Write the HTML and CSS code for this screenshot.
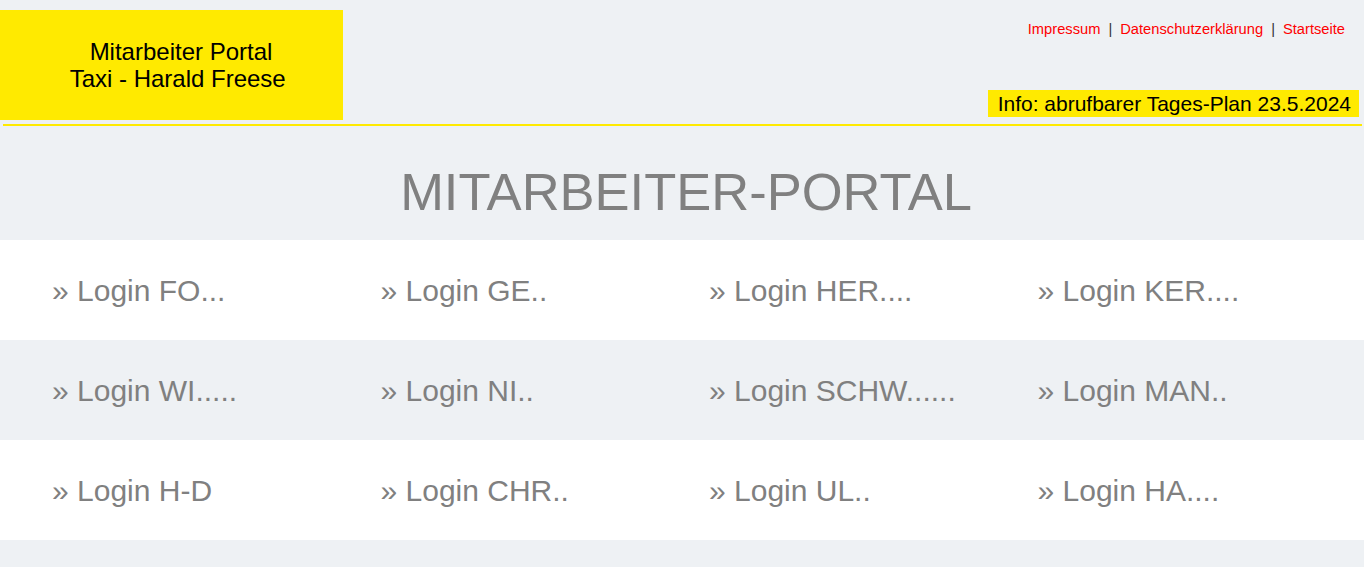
FILE: index.html
```html
<!DOCTYPE html>
<html lang="de">
<head>
<meta charset="UTF-8">
<meta name="viewport" content="width=device-width, initial-scale=1.0">
<title>Mitarbeiter-Portal</title>
<link rel="stylesheet" href="styles.css">
</head>
<body>
<div id="header">
    <div class="brand">
        Mitarbeiter Portal<br>
        Taxi - Harald Freese&nbsp;
    </div>
    <div class="header-right">
        <div class="top-links">
            <a href="#">Impressum</a><span class="sep">|</span><a href="#">Datenschutzerklärung</a><span class="sep">|</span><a href="#">Startseite</a>
        </div>
        <div class="info">Info: abrufbarer Tages-Plan 23.5.2024</div>
    </div>
</div>
<div class="header-line"></div>

<div class="title">
    <h1>MITARBEITER-PORTAL</h1>
</div>

<div class="login-row white">
    <a href="#">» Login FO...</a>
    <a href="#">» Login GE..</a>
    <a href="#">» Login HER....</a>
    <a href="#">» Login KER....</a>
</div>
<div class="login-row">
    <a href="#">» Login WI.....</a>
    <a href="#">» Login NI..</a>
    <a href="#">» Login SCHW......</a>
    <a href="#">» Login MAN..</a>
</div>
<div class="login-row white">
    <a href="#">» Login H-D</a>
    <a href="#">» Login CHR..</a>
    <a href="#">» Login UL..</a>
    <a href="#">» Login HA....</a>
</div>
</body>
</html>
```

FILE: styles.css
```css
body {
    font-family: "Liberation Sans", Arial, sans-serif;
    margin: 0;
    padding: 0;
    background-color: #eef1f4;
}
a {
    text-decoration: none;
}
#header {
    display: flex;
    justify-content: space-between;
    height: 110px;
    padding-top: 10px;
}
.brand {
    width: 324px;
    padding-left: 19px;
    display: flex;
    align-items: center;
    justify-content: center;
    text-align: center;
    background-color: #ffea00;
    color: #000;
    font-size: 24px;
    line-height: 27.5px;
}
.header-right {
    display: flex;
    flex-direction: column;
    justify-content: space-between;
    align-items: flex-end;
    padding-right: 5px;
    padding-bottom: 3px;
}
.top-links {
    margin-top: 9px;
    margin-right: 14px;
    font-size: 14.7px;
    line-height: 20px;
}
.top-links a {
    color: #ff0000;
}
.top-links .sep {
    color: #333;
    margin: 0 8px;
}
.info {
    background-color: #ffea00;
    color: #000;
    font-size: 21px;
    line-height: 26px;
    padding: 1px 8px 0 10px;
}
.header-line {
    height: 2px;
    margin: 4px 2px 0 3px;
    background-color: #ffea00;
}
.title {
    padding: 36px 0 18px 8px;
    text-align: center;
}
.title h1 {
    margin: 0;
    font-size: 52.5px;
    line-height: 60px;
    font-weight: normal;
    color: #808080;
}
.login-row {
    display: grid;
    grid-template-columns: repeat(4, 1fr);
    align-items: center;
    height: 98px;
    padding: 2px 25px 0 25px;
}
.login-row.white {
    background-color: #fff;
}
.login-row a {
    padding-left: 27px;
    font-size: 30px;
    color: #808080;
}
```
